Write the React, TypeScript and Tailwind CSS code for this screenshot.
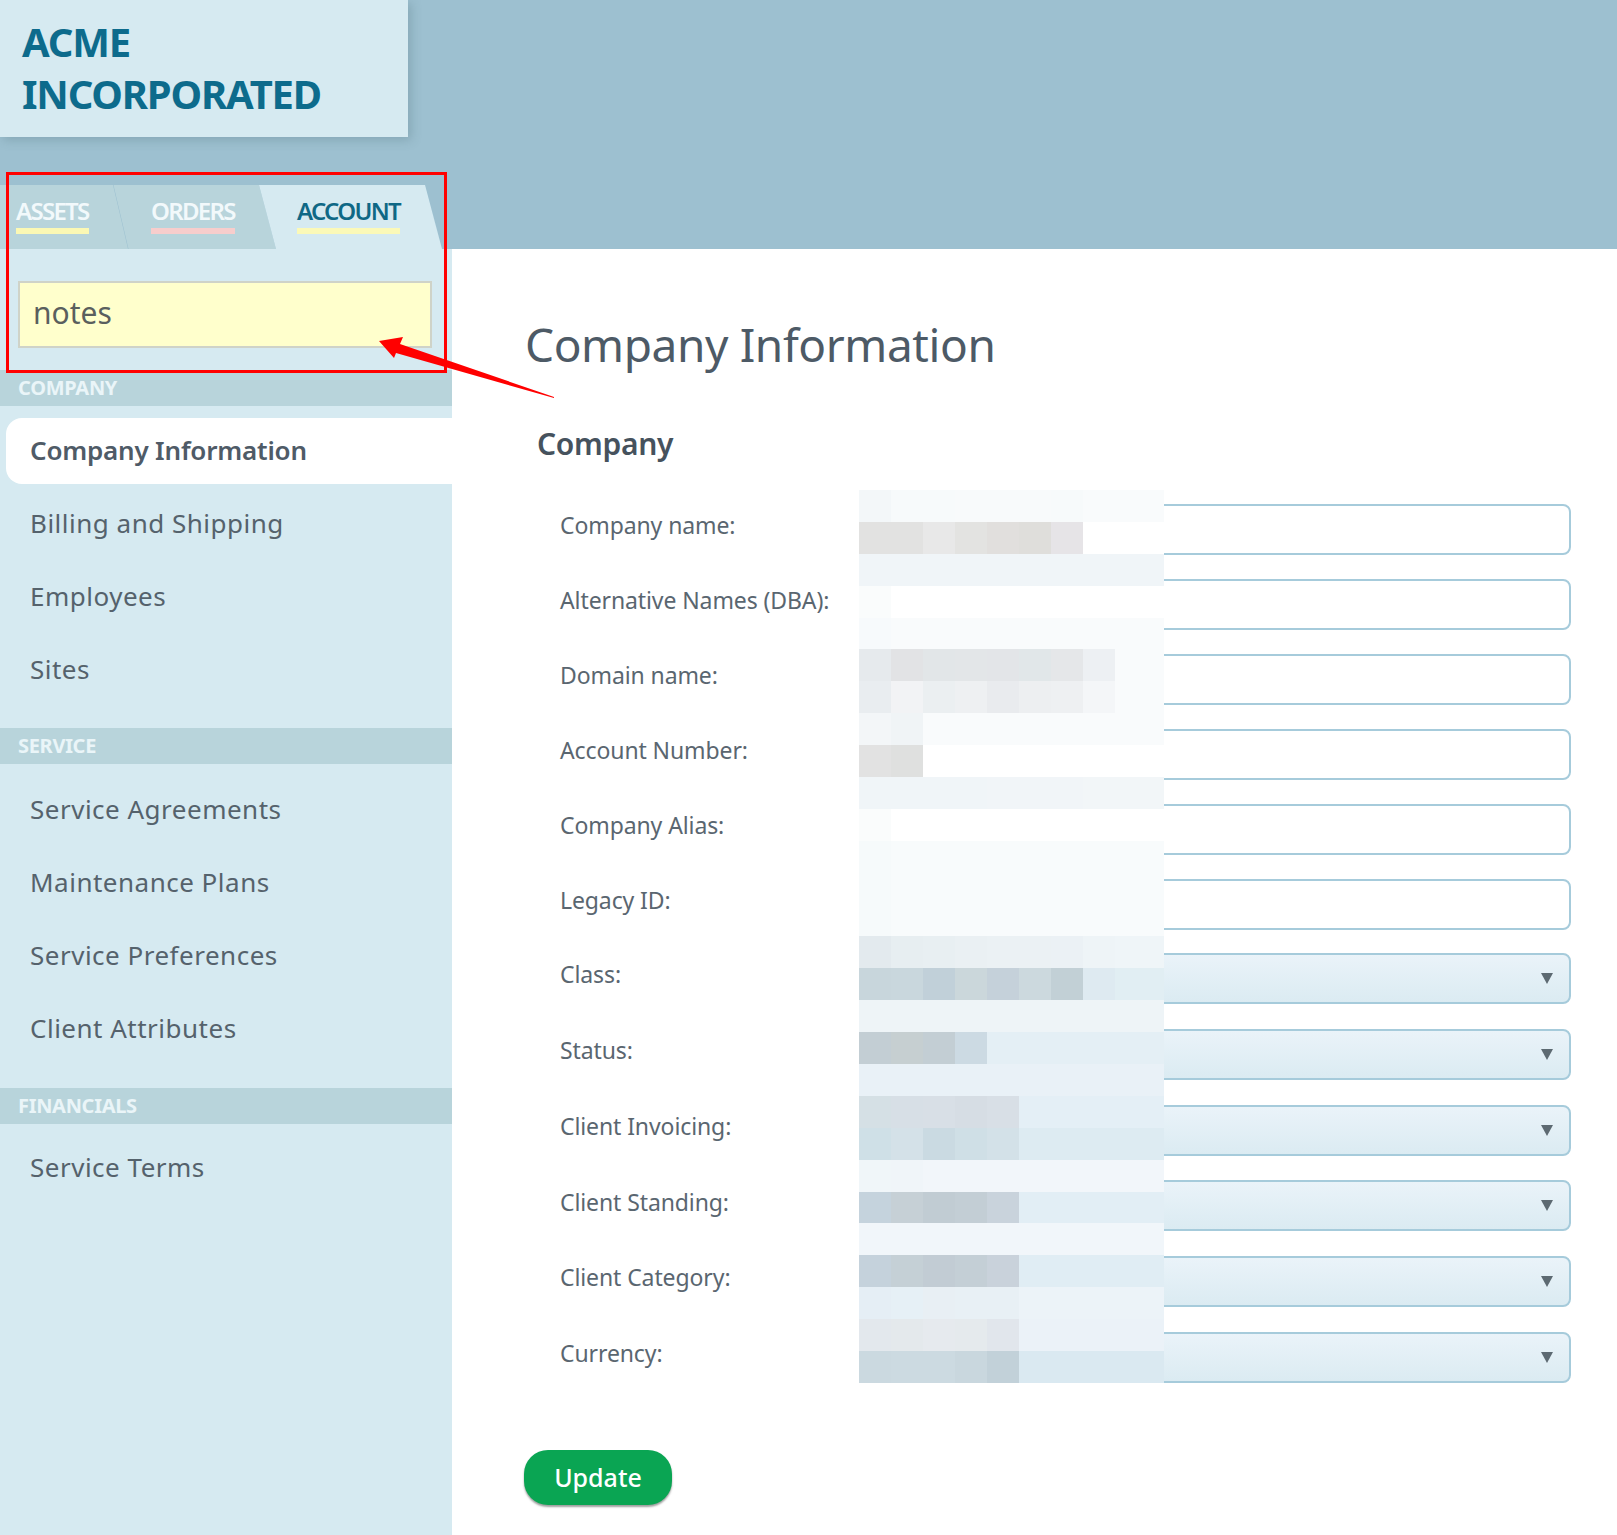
import React from "react";

const FONT = "font-['Noto_Sans',sans-serif]";

type Tab = { label: string; bar: string };

const mainNav = ["Billing and Shipping", "Employees", "Sites"];
const serviceNav = ["Service Agreements", "Maintenance Plans", "Service Preferences", "Client Attributes"];
const financialNav = ["Service Terms"];

const textFields = ["Company name:", "Alternative Names (DBA):", "Domain name:", "Account Number:", "Company Alias:", "Legacy ID:"];
const selectFields = ["Class:", "Status:", "Client Invoicing:", "Client Standing:", "Client Category:", "Currency:"];

// redacted block from the screenshot, one row per 32px band
const mosaic: string[][] = [
  ["f3f7f9", "f7fafb", "f7fafb", "f8fafb", "f8fafb", "f8fafb", "f7fafb", "f9fbfc", "f9fbfc"],
  ["e2e2e1", "e2e2e1", "e8e8e8", "e3e3e1", "e1dfdd", "dfdedb", "e6e4e7", "ffffff", "ffffff"],
  ["f0f5f8", "f0f5f8", "f0f5f8", "f0f5f8", "f0f5f8", "f0f5f8", "f0f5f8", "f0f5f8", "f0f5f8"],
  ["fafcfc", "ffffff", "ffffff", "ffffff", "ffffff", "ffffff", "ffffff", "ffffff", "ffffff"],
  ["f7fafc", "f9fbfc", "f9fbfc", "f9fbfc", "f9fbfc", "f9fbfc", "f9fbfc", "f9fbfc", "f9fbfc"],
  ["e6eaed", "e2e3e5", "e2e6e8", "e3e6e8", "e3e5e8", "e1e7e9", "e5e7e9", "edf0f3", "f9fbfc"],
  ["e9edf0", "f2f3f5", "ebeff1", "eef0f2", "e9ebee", "edeff1", "eef0f2", "f4f6f8", "f9fbfc"],
  ["f3f6f8", "f0f4f6", "f9fbfc", "f9fbfc", "f9fbfc", "f9fbfc", "f9fbfc", "f9fbfc", "f9fbfc"],
  ["e2e2e2", "dfe0df", "ffffff", "ffffff", "ffffff", "ffffff", "ffffff", "ffffff", "ffffff"],
  ["f0f5f8", "f0f5f8", "f0f5f8", "f0f5f8", "f1f5f8", "f1f5f8", "f1f5f8", "f2f6f8", "f2f6f8"],
  ["fafcfc", "ffffff", "ffffff", "ffffff", "ffffff", "ffffff", "ffffff", "ffffff", "ffffff"],
  ["f6fafb", "f8fbfc", "f8fbfc", "f8fbfc", "f8fbfc", "f8fbfc", "f8fbfc", "f8fbfc", "f8fbfc"],
  ["f6fafb", "f8fbfc", "f8fbfc", "f8fbfc", "f8fbfc", "f8fbfc", "f8fbfc", "f8fbfc", "f8fbfc"],
  ["f6fafb", "f8fbfc", "f8fbfc", "f8fbfc", "f8fbfc", "f8fbfc", "f8fbfc", "f8fbfc", "f8fbfc"],
  ["e3eaee", "e7eef1", "e8eff2", "eaf0f3", "ebf1f4", "ebf1f4", "ebf1f5", "eef4f7", "eff5f8"],
  ["c8d6dc", "c9d7dd", "c1d0d9", "cbd7db", "c5d1da", "ccd9de", "c2d0d6", "deeaf1", "e1eef3"],
  ["eef4f7", "eef4f7", "eef4f7", "eef4f7", "eef4f7", "eef4f7", "eef4f7", "eef4f7", "eef4f7"],
  ["c3ced4", "c6cfd1", "c3ced4", "ccdae3", "e4eff5", "e4eff5", "e4eff5", "e4eff5", "e4eff5"],
  ["e9f1f7", "e9f1f7", "e9f1f7", "e9f1f7", "e9f1f7", "e9f1f7", "e9f1f7", "e9f1f7", "e9f1f7"],
  ["d5e0e5", "d7dfe6", "d8dfe6", "d6dde4", "d8dfe6", "e4eff6", "e4eff6", "e4eff6", "e4eff6"],
  ["cfe0e7", "d4e1e8", "cadae2", "cfdfe6", "d3e1e8", "ddebf2", "ddebf2", "ddebf2", "ddebf2"],
  ["f0f6f9", "f0f5f9", "f2f6fa", "f2f6fa", "f2f6fa", "f2f6fa", "f2f6fa", "f2f6fa", "f2f6fa"],
  ["c5d3dd", "c6d0d6", "c1ccd3", "c3ced5", "c9d3dc", "e2eef5", "e2eef5", "e2eef5", "e2eef5"],
  ["f1f6fa", "f1f6fa", "f1f6fa", "f1f6fa", "f1f6fa", "f1f6fa", "f1f6fa", "f1f6fa", "f1f6fa"],
  ["c5d2dc", "c5d0d6", "c2ccd4", "c4cfd6", "c9d2db", "e0edf4", "e0edf4", "e0edf4", "e0edf4"],
  ["e5eef5", "e6f0f6", "e8eff4", "e8f0f5", "e8f0f5", "ecf3f8", "ecf3f8", "ecf3f8", "ecf3f8"],
  ["e3e8ed", "e4e9ec", "e6eaee", "e5eaed", "e1e6ec", "ebf2f8", "ebf2f8", "ebf2f8", "ebf2f8"],
  ["cbd9e0", "ccdae1", "ccdae1", "c9d7de", "c2d1d9", "dae9f1", "dae9f1", "dae9f1", "dae9f1"],
];

function TabLabel({ tab, dark }: { tab: Tab; dark?: boolean }) {
  return (
    <span className="inline-flex flex-col">
      <span className={`text-[24px] leading-[32px] font-semibold tracking-[-1.7px] ${dark ? "text-[#0f6885]" : "text-[#f2f9fb]"}`}>
        {tab.label}
      </span>
      <span className={`h-[6px] mt-[1px] ${tab.bar}`} />
    </span>
  );
}

function SectionHeader({ label, className = "" }: { label: string; className?: string }) {
  return (
    <div className={`h-[36px] flex items-center pl-[18px] bg-[#b8d4db] text-[#eaf5f8] text-[20px] font-bold tracking-[-0.3px] ${className}`}>
      {label}
    </div>
  );
}

function NavItem({ label }: { label: string }) {
  return <div className="h-[73px] flex items-center pl-[30px] pb-[3px] text-[26px] text-[#55626c] tracking-[0.5px]">{label}</div>;
}

function Caret() {
  return (
    <svg width="14" height="13" viewBox="0 0 14 13" className="absolute right-[15px] top-[17px]">
      <polygon points="1,1 13,1 7,12" fill="#5d6a72" />
    </svg>
  );
}

function Row({ label, select }: { label: string; select?: boolean }) {
  return (
    <div className="flex items-center h-[51px]">
      <label className="w-[299px] text-[23px] text-[#5a6670] tracking-[-0.1px] -mt-[8px]">{label}</label>
      {select ? (
        <div className="relative w-[712px] h-[51px] rounded-[8px] border-2 border-[#a6cbdb] bg-gradient-to-b from-[#eaf3f9] to-[#dbebf2]">
          <Caret />
        </div>
      ) : (
        <input className="w-[712px] h-[51px] rounded-[8px] border-2 border-[#a6cbdb] bg-white" />
      )}
    </div>
  );
}

export default function App() {
  const tabs: Tab[] = [
    { label: "ASSETS", bar: "bg-[#fbf8b4]" },
    { label: "ORDERS", bar: "bg-[#f7cdcc]" },
    { label: "ACCOUNT", bar: "bg-[#fbf9b8]" },
  ];

  return (
    <div className={`relative w-full h-[1535px] overflow-hidden bg-white ${FONT}`}>
      {/* top band */}
      <header className="h-[249px] bg-[#9dc0d0]">
        <div className="w-[408px] h-[137px] pl-[22px] pt-[16px] bg-[#d6eaf1] shadow-[3px_3px_10px_rgba(60,90,100,0.25)]">
          <h1 className="text-[40px] leading-[52px] font-bold tracking-[-1.2px] text-[#0d6b8c]">
            ACME
            <br />
            INCORPORATED
          </h1>
        </div>
        <div className="flex mt-[48px] h-[64px] w-[452px]">
          <div className="w-[128px] pl-[16px] pt-[10px] bg-[#b8d4db] [clip-path:polygon(0_0,113px_0,128px_100%,0_100%)]">
            <TabLabel tab={tabs[0]} />
          </div>
          <div className="w-[163px] -ml-[15px] pl-[38px] pt-[10px] bg-[#b8d4db] [clip-path:polygon(0.5px_0,146px_0,163px_100%,15.5px_100%)]">
            <TabLabel tab={tabs[1]} />
          </div>
          <div className="w-[184px] -ml-[18px] pl-[39px] pt-[10px] bg-[#d6eaf1] [clip-path:polygon(1px_0,167px_0,184px_100%,18px_100%)]">
            <TabLabel tab={tabs[2]} dark />
          </div>
        </div>
      </header>

      <div className="flex h-[1286px]">
        <aside className="w-[452px] shrink-0 bg-[#d6eaf1]">
          <div className="mt-[32px] ml-[18px] w-[414px] h-[67px] flex items-center pl-[13px] pb-[5px] bg-[#ffffcc] border-2 border-[#cfd3c8] text-[30px] text-[#5a5f5e]">
            notes
          </div>

          <SectionHeader label="COMPANY" className="mt-[22px]" />
          <div className="mt-[12px] ml-[6px] h-[66px] flex items-center pl-[24px] pb-[2px] bg-white rounded-l-[16px] text-[26px] font-semibold text-[#4f5b67] tracking-[-0.2px]">
            Company Information
          </div>
          <div className="mt-[4px]">
            {mainNav.map((n) => (
              <NavItem key={n} label={n} />
            ))}
          </div>

          <SectionHeader label="SERVICE" className="mt-[21px]" />
          <div className="mt-[10px]">
            {serviceNav.map((n) => (
              <NavItem key={n} label={n} />
            ))}
          </div>

          <SectionHeader label="FINANCIALS" className="mt-[22px]" />
          <div className="mt-[8px]">
            {financialNav.map((n) => (
              <NavItem key={n} label={n} />
            ))}
          </div>
        </aside>

        <main className="flex-1 pl-[73px]">
          <h2 className="mt-[63px] text-[46px] leading-[64px] text-[#4d5a66] tracking-[-0.4px]">Company Information</h2>
          <h3 className="mt-[48px] ml-[12px] text-[30px] leading-[40px] font-semibold text-[#46525d] tracking-[-0.3px]">Company</h3>

          <form className="relative mt-[40px] ml-[35px]">
            <div className="flex flex-col gap-[24px]">
              {textFields.map((f) => (
                <Row key={f} label={f} />
              ))}
            </div>
            <div className="mt-[23px] flex flex-col gap-[24.8px]">
              {selectFields.map((f) => (
                <Row key={f} label={f} select />
              ))}
            </div>
            {/* pixelated redaction over the field values */}
            <div className="absolute left-[299px] -top-[14px] grid grid-cols-[repeat(8,32px)_49px] auto-rows-[31.9px]">
              {mosaic.flatMap((row, r) =>
                row.map((c, i) => <div key={`${r}-${i}`} style={{ backgroundColor: `#${c}` }} />)
              )}
            </div>
          </form>

          <button className="mt-[67px] -ml-[1px] w-[148px] h-[55px] rounded-[24px] bg-[#0aa553] text-white text-[25px] font-medium shadow-[0_2px_2px_rgba(80,80,80,0.55)]">
            Update
          </button>
        </main>
      </div>

      {/* red annotation */}
      <div className="absolute left-[6px] top-[172px] w-[441px] h-[201px] border-[3px] border-[#f00] pointer-events-none" />
      <svg className="absolute left-0 top-0 pointer-events-none" width="600" height="420" viewBox="0 0 600 420">
        <polygon points="379,341 403,337 400,344 554,397 554,398 396,353 394,358" fill="#f00" />
      </svg>
    </div>
  );
}
